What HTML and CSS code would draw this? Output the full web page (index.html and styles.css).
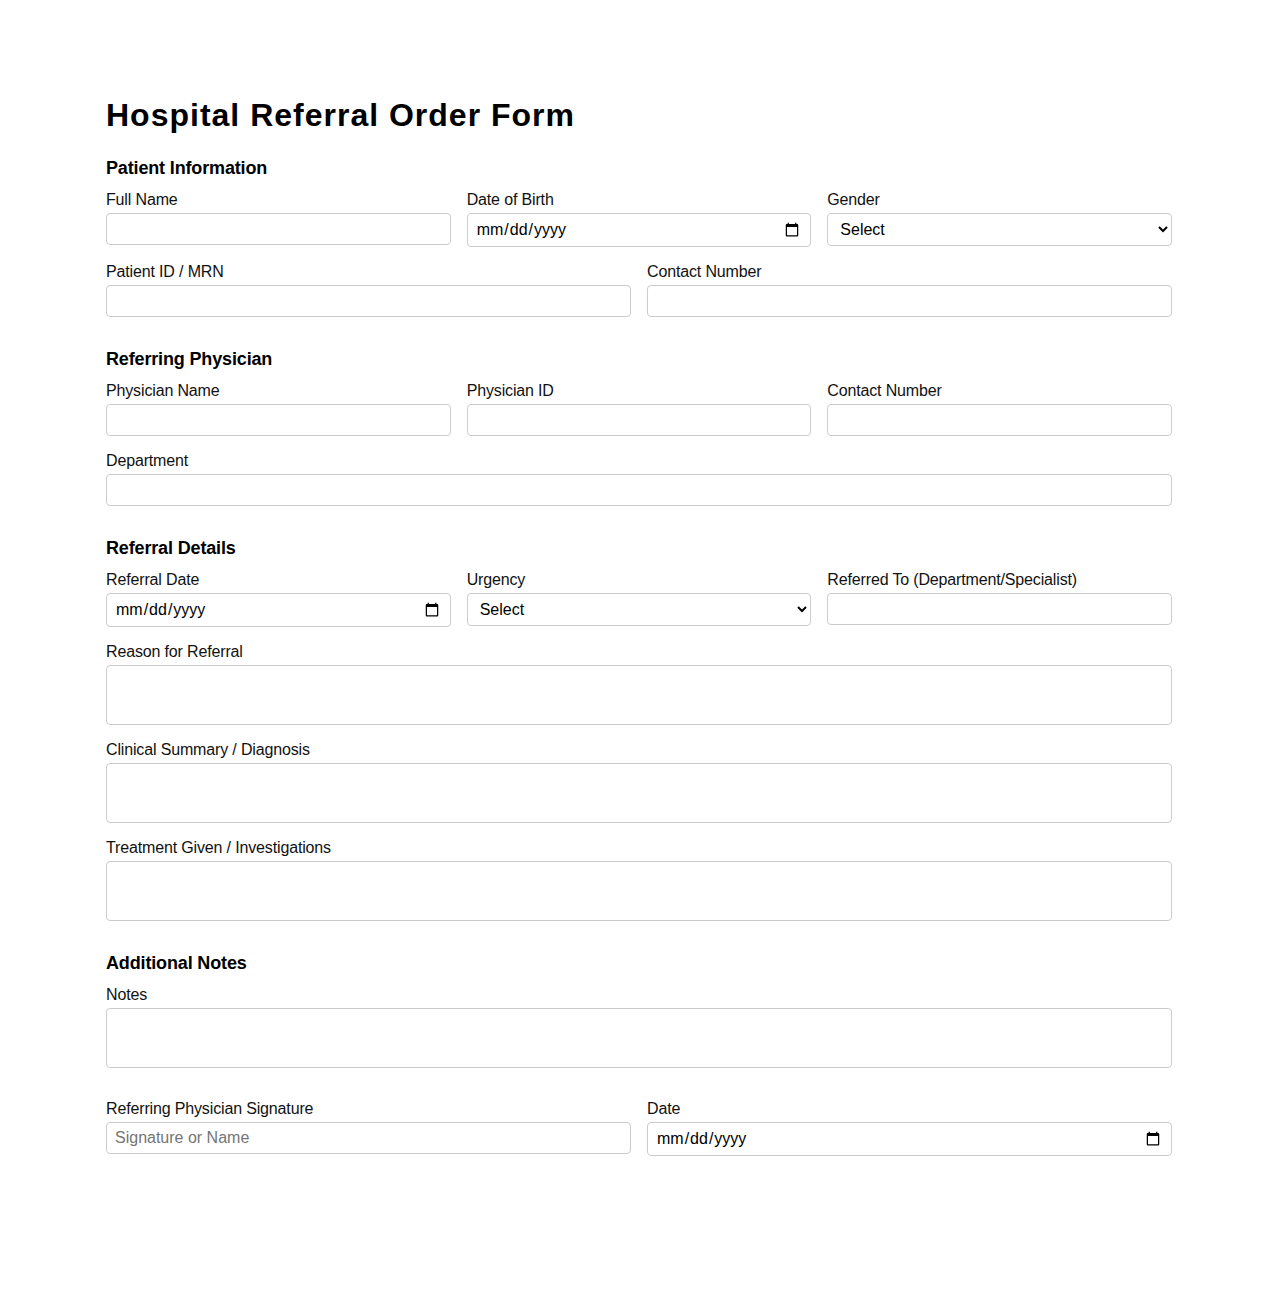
FILE: index.html
```html
<!DOCTYPE html>
<html lang="en">
<head>
<meta charset="utf-8">
<title>Hospital Referral Order Form</title>
<link rel="stylesheet" href="styles.css">
</head>
<body>
<form class="form">
  <h1 class="title">Hospital Referral Order Form</h1>

  <section class="section">
    <h2 class="section-title">Patient Information</h2>
    <div class="row cols-3">
      <div class="field"><label class="label">Full Name</label><input class="control" type="text"></div>
      <div class="field"><label class="label">Date of Birth</label><input class="control" type="date"></div>
      <div class="field"><label class="label">Gender</label>
        <select class="control"><option>Select</option><option>Male</option><option>Female</option><option>Other</option></select>
      </div>
    </div>
    <div class="row cols-2">
      <div class="field"><label class="label">Patient ID / MRN</label><input class="control" type="text"></div>
      <div class="field"><label class="label">Contact Number</label><input class="control" type="text"></div>
    </div>
  </section>

  <section class="section">
    <h2 class="section-title">Referring Physician</h2>
    <div class="row cols-3">
      <div class="field"><label class="label">Physician Name</label><input class="control" type="text"></div>
      <div class="field"><label class="label">Physician ID</label><input class="control" type="text"></div>
      <div class="field"><label class="label">Contact Number</label><input class="control" type="text"></div>
    </div>
    <div class="row">
      <div class="field"><label class="label">Department</label><input class="control" type="text"></div>
    </div>
  </section>

  <section class="section">
    <h2 class="section-title">Referral Details</h2>
    <div class="row cols-3">
      <div class="field"><label class="label">Referral Date</label><input class="control" type="date"></div>
      <div class="field"><label class="label">Urgency</label>
        <select class="control"><option>Select</option><option>Routine</option><option>Urgent</option><option>Emergency</option></select>
      </div>
      <div class="field"><label class="label">Referred To (Department/Specialist)</label><input class="control" type="text"></div>
    </div>
    <div class="row">
      <div class="field"><label class="label">Reason for Referral</label><textarea class="control area"></textarea></div>
    </div>
    <div class="row">
      <div class="field"><label class="label">Clinical Summary / Diagnosis</label><textarea class="control area"></textarea></div>
    </div>
    <div class="row">
      <div class="field"><label class="label">Treatment Given / Investigations</label><textarea class="control area"></textarea></div>
    </div>
  </section>

  <section class="section">
    <h2 class="section-title">Additional Notes</h2>
    <div class="row">
      <div class="field"><label class="label">Notes</label><textarea class="control area"></textarea></div>
    </div>
  </section>

  <section class="section">
    <div class="row cols-2">
      <div class="field"><label class="label">Referring Physician Signature</label><input class="control" type="text" placeholder="Signature or Name"></div>
      <div class="field"><label class="label">Date</label><input class="control" type="date"></div>
    </div>
  </section>
</form>
</body>
</html>
```

FILE: styles.css
```css
* { box-sizing: border-box; }
html, body { margin: 0; padding: 0; background: #fff; }
body {
  font-family: "Liberation Sans", Arial, sans-serif;
  color: #111;
}
.form {
  width: 1066px;
  margin: 0 auto;
  padding-top: 97px;
  padding-bottom: 80px;
}
.title {
  font-size: 32px;
  font-weight: 700;
  letter-spacing: 1px;
  margin: 0 0 24px 0;
  color: #000;
}
.section { margin-bottom: 32px; }
.section-title {
  font-size: 18px;
  font-weight: 700;
  letter-spacing: -0.15px;
  margin: 0 0 12px 0;
  color: #000;
}
.row {
  display: grid;
  grid-template-columns: 1fr;
  column-gap: 16px;
  margin-bottom: 16px;
}
.row:last-child { margin-bottom: 0; }
.cols-3 { grid-template-columns: repeat(3, 1fr); }
.cols-2 { grid-template-columns: repeat(2, 1fr); }
.field { display: flex; flex-direction: column; min-width: 0; }
.label {
  font-size: 16px;
  letter-spacing: -0.15px;
  margin-bottom: 4px;
  color: #111;
}
.control {
  width: 100%;
  font-family: "Liberation Sans", Arial, sans-serif;
  font-size: 16px;
  padding: 6px 8px;
  border: 1px solid #ccc;
  border-radius: 4px;
  background: #fff;
  color: #000;
}
.control::placeholder { color: #757575; }
.area {
  height: 60px;
  resize: none;
}
```
